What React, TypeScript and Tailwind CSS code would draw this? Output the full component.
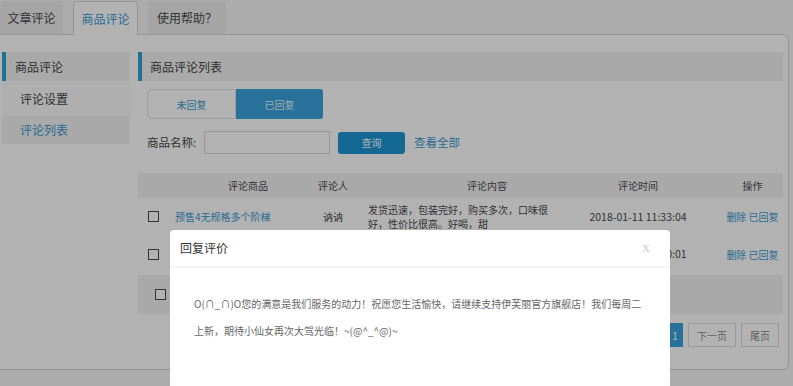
import React from 'react'

const font = { fontFamily: '"Microsoft YaHei", "Noto Sans CJK SC", sans-serif' }

function Box() {
  return <span className="block w-[11px] h-[11px] border border-[#4a4a4a] bg-white" />
}

function Tabs() {
  const tabs = [
    { label: '文章评论', w: 'w-[63px]', active: false },
    { label: '商品评论', w: 'w-[65px]', active: true },
    { label: '使用帮助？', w: 'w-[78px]', active: false },
  ]
  return (
    <div className="flex items-end gap-[10px] h-[34px] pt-[1px]">
      {tabs.map((t) => (
        <div key={t.label}
          className={
            t.active
              ? `${t.w} h-[34px] -mb-[1px] flex items-center justify-center rounded-t-[4px] border border-b-0 border-[#d6d6d6] bg-white text-[#3a9ad2] text-[12px] relative`
              : `${t.w} h-[33px] flex items-center justify-center rounded-t-[4px] bg-[#ececec] text-[#4a4a4a] text-[12px]`
          }>
          {t.label}
        </div>
      ))}
    </div>
  )
}

function Sidebar() {
  return (
    <div className="w-[128px] ml-[2px] flex flex-col">
      <div className="h-[29px] bg-[#f2f2f2] border-l-[4px] border-[#2f9fd8] flex items-center pl-[9px] text-[12px] text-[#444]">
        商品评论
      </div>
      <div className="bg-[#fbfbfb]">
        <div className="h-[35px] flex items-center pl-[18px] text-[12px] text-[#444]">评论设置</div>
        <div className="h-[28px] flex items-center pl-[18px] text-[12px] text-[#3a9ad2] bg-[#f2f2f2]">评论列表</div>
      </div>
    </div>
  )
}

function Table() {
  return (
    <div className="text-[10px] text-[#4a4a4a]">
      <div className="flex h-[25px] items-center bg-[#f2f2f2]">
        <div className="w-[30px]" />
        <div className="w-[140px] pl-5 text-center">评论商品</div>
        <div className="w-[50px] text-center">评论人</div>
        <div className="w-[246px] pl-[12px] text-center">评论内容</div>
        <div className="w-[68px] flex justify-center whitespace-nowrap">评论时间</div>
        <div className="w-[111px] pl-[50px] text-center">操作</div>
      </div>
      <div className="flex h-[37px] items-center">
        <div className="w-[30px] flex justify-center"><Box /></div>
        <div className="w-[140px] pl-[7px] text-[#3a9ad2]">预售4无规格多个阶梯</div>
        <div className="w-[50px] text-center">讷讷</div>
        <div className="w-[246px] pl-[10px]">
          <div className="w-[186px] leading-[14px]">发货迅速，包装完好，购买多次，口味很好，性价比很高。好喝，甜</div>
        </div>
        <div className="w-[68px] flex justify-center whitespace-nowrap text-[10.5px]">2018-01-11 11:33:04</div>
        <div className="w-[111px] pl-[50px] text-center text-[#3a9ad2] whitespace-nowrap">删除 已回复</div>
      </div>
      <div className="flex h-[38px] items-center">
        <div className="w-[30px] flex justify-center"><Box /></div>
        <div className="w-[140px] pl-[7px] text-[#3a9ad2]">预售4无规格多个阶梯</div>
        <div className="w-[50px] text-center">讷讷</div>
        <div className="w-[246px] pl-[10px]">发货迅速，包装完好</div>
        <div className="w-[68px] flex justify-center whitespace-nowrap text-[10.5px]">2018-01-11 11:30:01</div>
        <div className="w-[111px] pl-[50px] text-center text-[#3a9ad2] whitespace-nowrap">删除 已回复</div>
      </div>
      <div className="flex h-[39px] items-center bg-[#f2f2f2] mt-[2px] pl-[17px]">
        <Box />
      </div>
      <div className="flex justify-end gap-[5px] mt-[9px] pr-[4px]">
        <div className="w-[34px] h-[24px] flex items-center justify-center border border-[#dcdcdc]">上一页</div>
        <div className="w-[16px] h-[24px] flex items-center justify-center bg-[#3aa3dd] text-white">1</div>
        <div className="w-[48px] h-[24px] flex items-center justify-center border border-[#dcdcdc] text-[#888]">下一页</div>
        <div className="w-[38px] h-[24px] flex items-center justify-center border border-[#dcdcdc] text-[#888]">尾页</div>
      </div>
    </div>
  )
}

function Content() {
  return (
    <div className="w-[645px] flex flex-col">
      <div className="h-[29px] bg-[#f2f2f2] border-l-[4px] border-[#2f9fd8] flex items-center pl-[8px] text-[12px] text-[#444]">
        商品评论列表
      </div>
      <div className="flex ml-[9px] mt-[8px] w-[176px] h-[30px] text-[10px]">
        <div className="flex-1 flex items-center justify-center border border-[#e2e2e2] rounded-l-[3px] text-[#3a9ad2] bg-white">未回复</div>
        <div className="flex-1 flex items-center justify-center rounded-r-[3px] bg-[#3aa3dd] text-[#e8f4fb]">已回复</div>
      </div>
      <div className="flex items-center ml-[9px] mt-[12px] h-[23px]">
        <span className="text-[11.5px] text-[#444] w-[57px]">商品名称:</span>
        <div className="w-[126px] h-[23px] border border-[#d8d8d8] bg-white" />
        <div className="ml-[8px] w-[67px] h-[22px] rounded-[3px] bg-[#1d96d4] text-white text-[10px] flex items-center justify-center">查询</div>
        <span className="ml-[9px] text-[11.5px] text-[#3a9ad2]">查看全部</span>
      </div>
      <div className="mt-[19px]">
        <Table />
      </div>
    </div>
  )
}

function Modal() {
  return (
    <div className="absolute z-30 left-[170px] top-[230px] w-[500px] h-[170px] bg-white rounded-[4px]">
      <div className="h-[38px] flex items-center justify-between px-[10px] border-b-2 border-[#f3f3f3]">
        <span className="text-[12px] text-[#333]">回复评价</span>
        <span className="mr-[10px] text-[11px] text-[#c8c8c8]" style={{ fontFamily: '"Liberation Serif", serif' }}>X</span>
      </div>
      <div className="px-[24px] pt-[22px] text-[10px] leading-[27px] text-[#666]">
        O(∩_∩)O您的满意是我们服务的动力！祝愿您生活愉快，请继续支持伊芙丽官方旗舰店！我们每周二<br />上新，期待小仙女再次大驾光临！~(@^_^@)~
      </div>
    </div>
  )
}

export default function App() {
  return (
    <div className="relative w-[793px] h-[386px] overflow-hidden bg-[#f7f7f7]" style={font}>
      <Tabs />
      <div className="w-[789px] h-[336px] bg-white border-t border-r border-b border-[#d6d6d6] rounded-tr-[6px] rounded-br-[6px] flex gap-[8px] pt-[17px]">
        <Sidebar />
        <Content />
      </div>
      <div className="absolute inset-0 z-20 bg-black/30" />
      <Modal />
    </div>
  )
}
